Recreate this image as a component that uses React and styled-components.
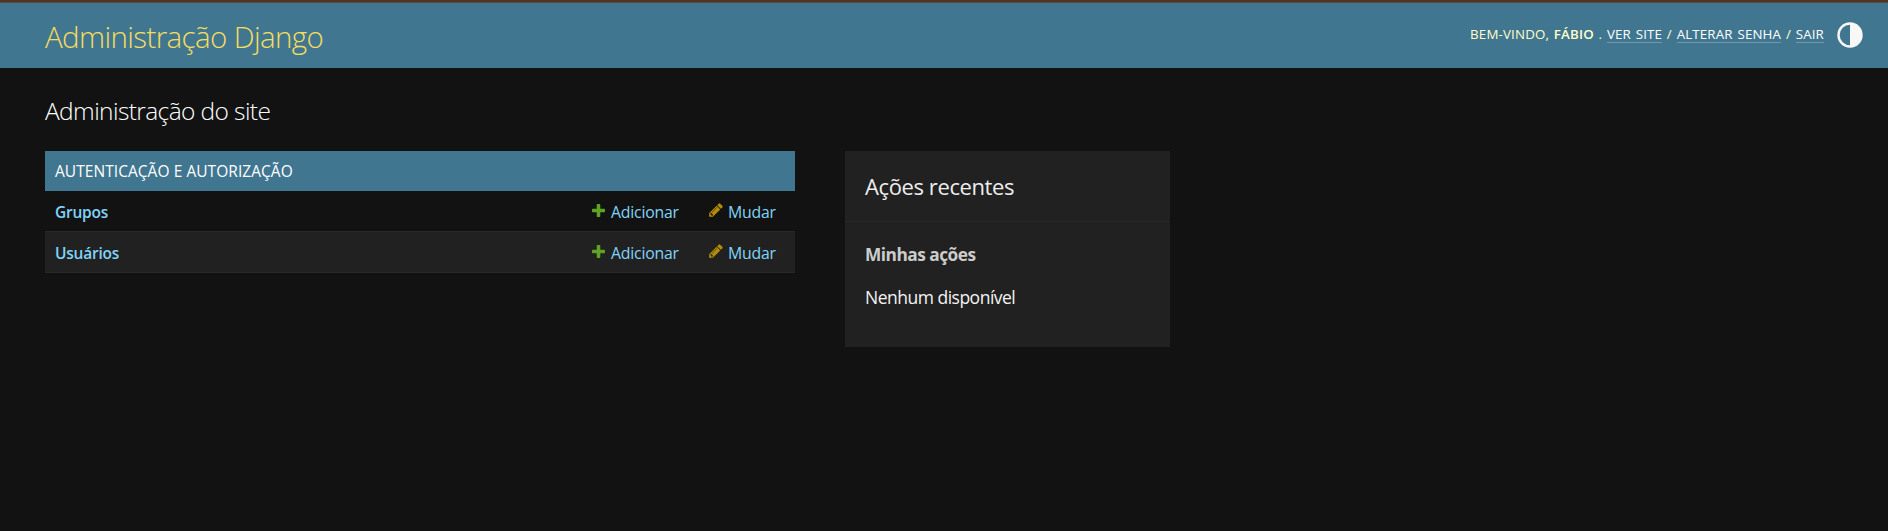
import React from "react";
import styled, { createGlobalStyle } from "styled-components";

const GlobalStyle = createGlobalStyle`
  * { box-sizing: border-box; }
  body {
    margin: 0;
    background: #121212;
    color: #eeeeee;
    font-family: "Segoe UI", "Open Sans", "Noto Sans", sans-serif;
    font-size: 16.25px;
  }
  h1, h2, h3, p { margin: 0; }
  a { color: #81d4fa; text-decoration: none; }
`;

const Page = styled.div`
  height: 531px;
  overflow: hidden;
  border-top: 2px solid #4f3621;
`;

const Header = styled.header`
  display: flex;
  justify-content: space-between;
  height: 66px;
  padding: 0 25px 0 45px;
  background: #417690;
  border-top: 1px solid #5e4a3e;
  color: #ffffcc;
`;

const Branding = styled.h1`
  font-size: 29.5px;
  font-weight: 300;
  line-height: 40px;
  padding-top: 14px;
  letter-spacing: -0.62px;
  color: #f5dd5d;
`;

const UserTools = styled.div`
  display: flex;
  padding-top: 19px;
  font-size: 13.3px;
  font-weight: 400;
  line-height: 24px;
  letter-spacing: 0.17px;
  word-spacing: 1.1px;
  text-transform: uppercase;
  white-space: pre;
  strong { font-weight: 600; }
`;

const ToolLink = styled.a`
  display: inline-block;
  height: 21px;
  color: #ffffff;
  border-bottom: 1px solid rgba(255, 255, 255, 0.25);
`;

const ThemeToggle = styled.svg`
  width: 26px;
  height: 26px;
  margin-left: 13px;
`;

const Main = styled.main`
  padding: 25px 45px;
`;

const PageTitle = styled.h1`
  height: 58px;
  font-size: 24.5px;
  font-weight: 300;
  line-height: 36px;
  letter-spacing: -0.6px;
  color: #ffffff;
`;

const Columns = styled.div`
  display: flex;
  align-items: flex-start;
  gap: 50px;
`;

const Module = styled.section`
  width: 750px;
`;

const Caption = styled.h2`
  height: 40px;
  padding: 0 10px;
  background: #417690;
  color: #ffffff;
  font-size: 15.5px;
  font-weight: 400;
  line-height: 41px;
  text-transform: uppercase;
  letter-spacing: 0.05px;
`;

const Row = styled.div`
  display: flex;
  align-items: center;
  height: 41px;
  padding: 1px 20px 0 10px;
  background: ${(p) => (p.$shaded ? "#212121" : "#121212")};
  border-bottom: 1px solid #282828;
`;

const ModelLink = styled.a`
  flex: 1;
  font-size: 15.5px;
  font-weight: 600;
  letter-spacing: -0.22px;
`;

const ActionLink = styled.a`
  display: flex;
  align-items: center;
  width: ${(p) => p.$width}px;
  gap: ${(p) => p.$gap}px;
  font-size: 15.8px;
  letter-spacing: -0.2px;
  svg { flex: none; margin-top: -3px; }
`;

const Aside = styled.aside`
  width: 325px;
  height: 196px;
  background: #212121;
`;

const AsideTitle = styled.h2`
  height: 71px;
  padding: 0 20px;
  border-bottom: 1px solid #282828;
  font-size: 22px;
  font-weight: 400;
  line-height: 70px;
  letter-spacing: -0.4px;
`;

const AsideSubtitle = styled.h3`
  padding: 19px 20px 0;
  color: #cccccc;
  font-size: 17.3px;
  font-weight: 700;
  line-height: 28px;
  letter-spacing: -0.5px;
`;

const AsideText = styled.p`
  padding: 14px 20px 0;
  color: #f4f4f4;
  font-size: 17.5px;
  line-height: 28px;
  letter-spacing: -0.5px;
`;

const PlusIcon = () => (
  <svg width="13" height="13" viewBox="192 192 1408 1408">
    <path
      fill="#5fa225"
      d="M1600 796v192q0 40-28 68t-68 28h-416v416q0 40-28 68t-68 28h-192q-40 0-68-28t-28-68v-416h-416q-40 0-68-28t-28-68v-192q0-40 28-68t68-28h416v-416q0-40 28-68t68-28h192q40 0 68 28t28 68v416h416q40 0 68 28t28 68z"
    />
  </svg>
);

const PencilIcon = () => (
  <svg width="16" height="16" viewBox="0 0 1792 1792">
    <path
      fill="#b48c08"
      d="M491 1536l91-91-235-235-91 91v107h128v128h107zm523-928q0-22-22-22-10 0-17 7l-542 542q-7 7-7 17 0 22 22 22 10 0 17-7l542-542q7-7 7-17zm-54-192l416 416-832 832h-416v-416zm683 96q0 53-37 90l-166 166-416-416 166-165q36-38 90-38 53 0 91 38l235 234q37 39 37 91z"
    />
  </svg>
);

const models = ["Grupos", "Usuários"];

export default function App() {
  return (
    <>
      <GlobalStyle />
      <Page>
        <Header>
          <Branding>Administração Django</Branding>
          <UserTools>
            <div>
              Bem-vindo, <strong>Fábio</strong>{" . "}
              <ToolLink>Ver site</ToolLink>{" / "}
              <ToolLink>Alterar senha</ToolLink>{" / "}
              <ToolLink>Sair</ToolLink>
            </div>
            <ThemeToggle viewBox="0 0 26 26">
              <circle cx="13" cy="13" r="11.5" fill="none" stroke="#f8f8f8" strokeWidth="2.4" />
              <path d="M13 1a12 12 0 0 1 0 24z" fill="#f8f8f8" />
            </ThemeToggle>
          </UserTools>
        </Header>
        <Main>
          <PageTitle>Administração do site</PageTitle>
          <Columns>
            <Module>
              <Caption>Autenticação e Autorização</Caption>
              {models.map((name, i) => (
                <Row key={name} $shaded={i % 2 === 1}>
                  <ModelLink>{name}</ModelLink>
                  <ActionLink $width={116} $gap={6}>
                    <PlusIcon />
                    Adicionar
                  </ActionLink>
                  <ActionLink $width={67} $gap={4}>
                    <PencilIcon />
                    Mudar
                  </ActionLink>
                </Row>
              ))}
            </Module>
            <Aside>
              <AsideTitle>Ações recentes</AsideTitle>
              <AsideSubtitle>Minhas ações</AsideSubtitle>
              <AsideText>Nenhum disponível</AsideText>
            </Aside>
          </Columns>
        </Main>
      </Page>
    </>
  );
}
